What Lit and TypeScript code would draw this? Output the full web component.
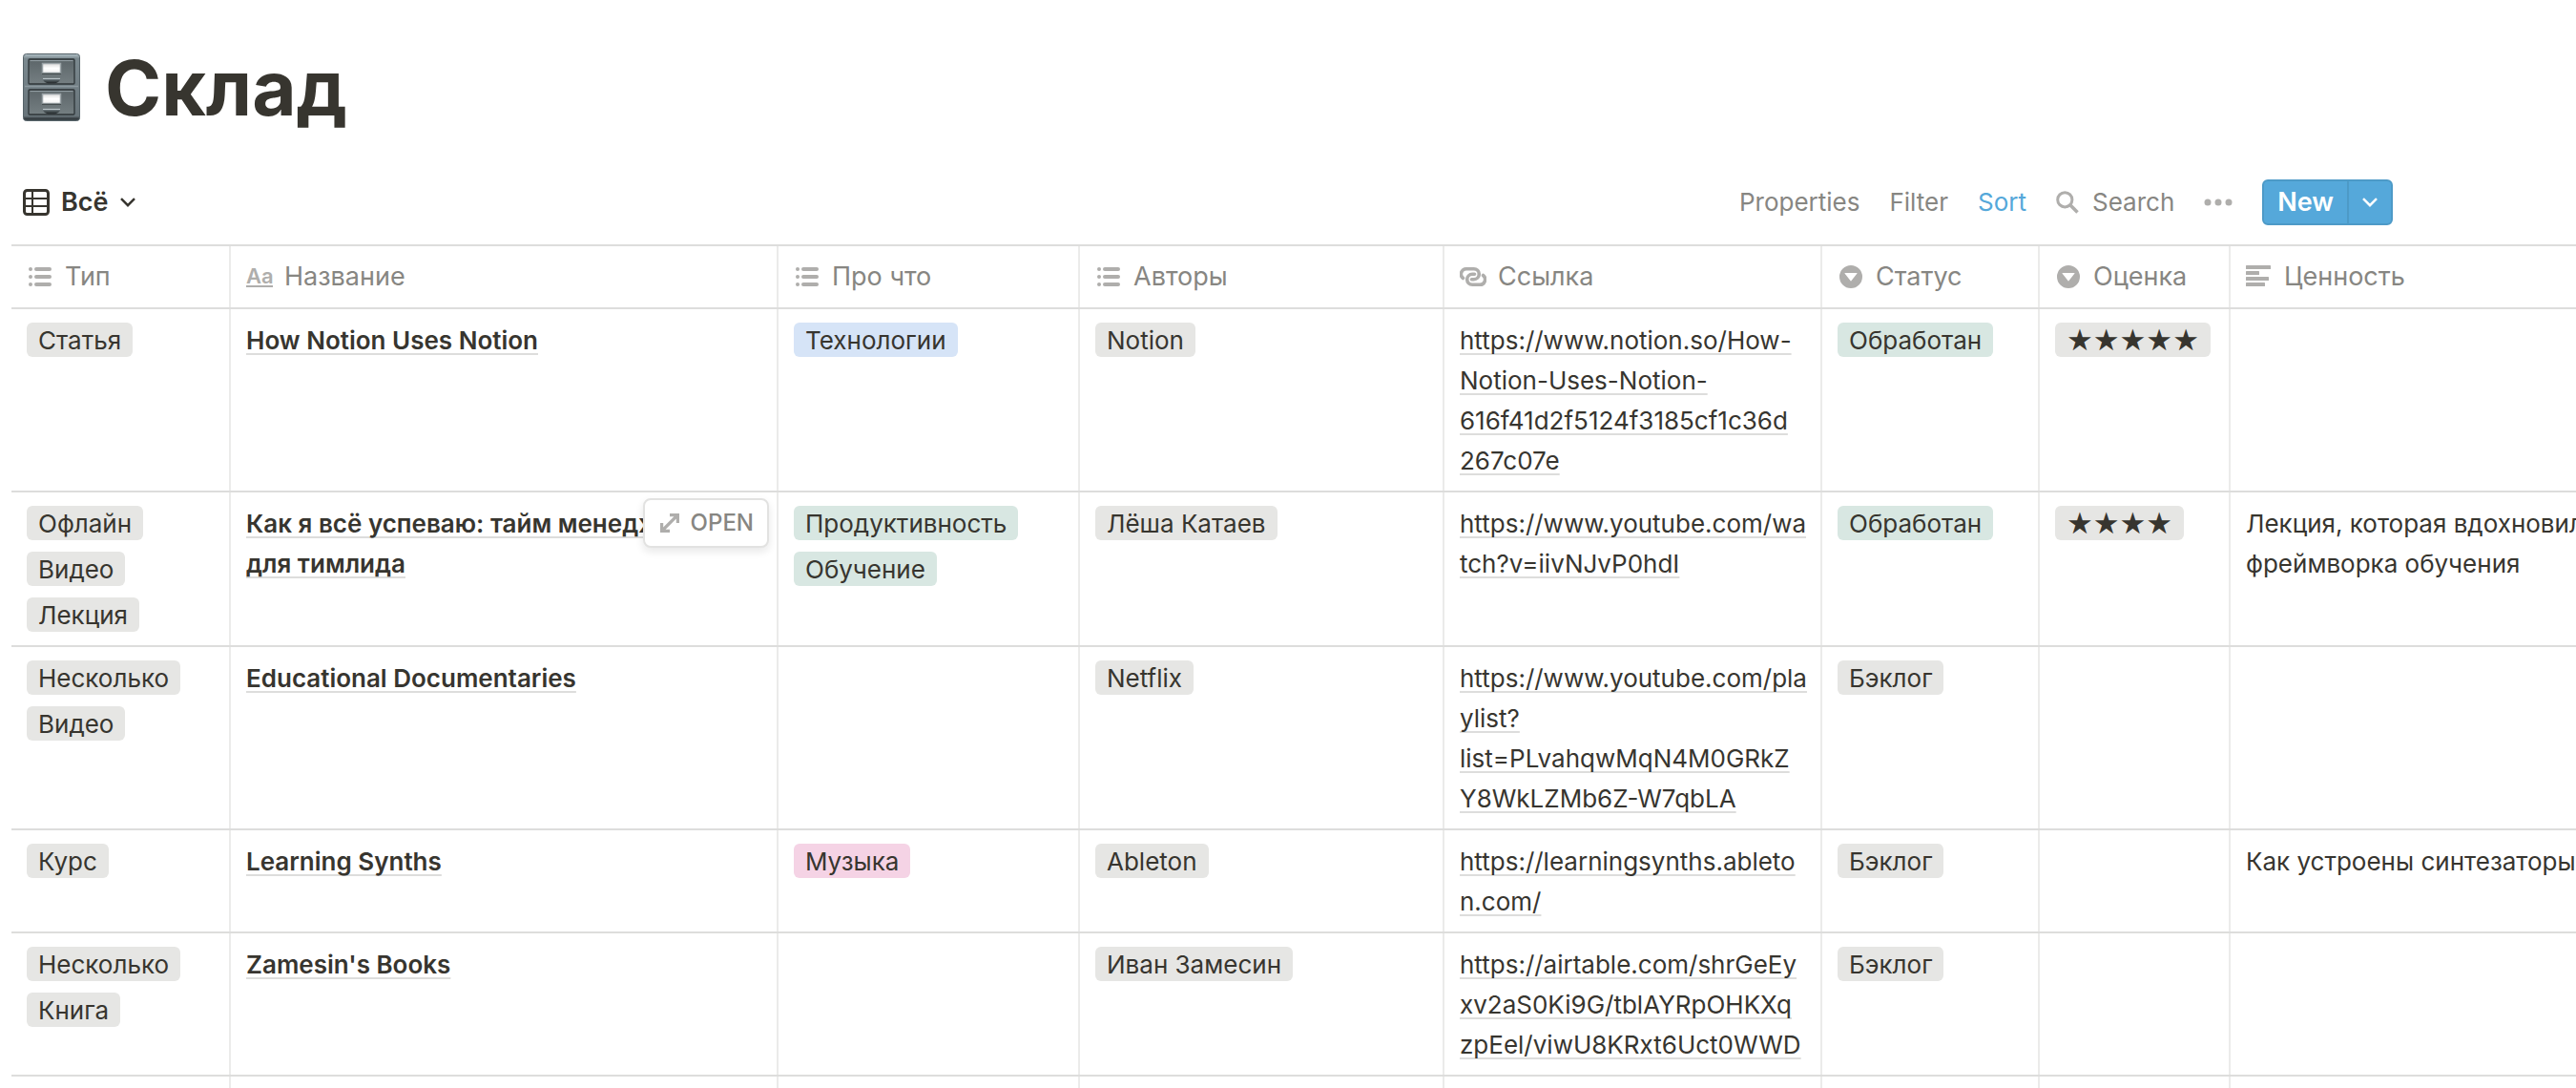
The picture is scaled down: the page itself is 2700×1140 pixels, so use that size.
import { LitElement, html, css, svg, nothing } from "lit";
import { customElement } from "lit/decorators.js";

type Tone = "gray" | "green" | "blue" | "pink";
type Tag = { label: string; tone: Tone };
type Row = {
  kind: string[];
  name: string[];
  topics: Tag[];
  authors: string[];
  link: string[];
  status: Tag;
  stars: number;
  value: string[];
  hovered?: boolean;
};

const done: Tag = { label: "Обработан", tone: "green" };
const backlog: Tag = { label: "Бэклог", tone: "gray" };

const rows: Row[] = [
  {
    kind: ["Статья"],
    name: ["How Notion Uses Notion"],
    topics: [{ label: "Технологии", tone: "blue" }],
    authors: ["Notion"],
    link: ["https://www.notion.so/How-", "Notion-Uses-Notion-", "616f41d2f5124f3185cf1c36d", "267c07e"],
    status: done,
    stars: 5,
    value: [],
  },
  {
    kind: ["Офлайн", "Видео", "Лекция"],
    name: ["Как я всё успеваю: тайм менеджмент", "для тимлида"],
    topics: [
      { label: "Продуктивность", tone: "green" },
      { label: "Обучение", tone: "green" },
    ],
    authors: ["Лёша Катаев"],
    link: ["https://www.youtube.com/wa", "tch?v=iivNJvP0hdI"],
    status: done,
    stars: 4,
    value: ["Лекция, которая вдохновила", "фреймворка обучения"],
    hovered: true,
  },
  {
    kind: ["Несколько", "Видео"],
    name: ["Educational Documentaries"],
    topics: [],
    authors: ["Netflix"],
    link: ["https://www.youtube.com/pla", "ylist?", "list=PLvahqwMqN4M0GRkZ", "Y8WkLZMb6Z-W7qbLA"],
    status: backlog,
    stars: 0,
    value: [],
  },
  {
    kind: ["Курс"],
    name: ["Learning Synths"],
    topics: [{ label: "Музыка", tone: "pink" }],
    authors: ["Ableton"],
    link: ["https://learningsynths.ableto", "n.com/"],
    status: backlog,
    stars: 0,
    value: ["Как устроены синтезаторы"],
  },
  {
    kind: ["Несколько", "Книга"],
    name: ["Zamesin's Books"],
    topics: [],
    authors: ["Иван Замесин"],
    link: ["https://airtable.com/shrGeEy", "xv2aS0Ki9G/tblAYRpOHKXq", "zpEel/viwU8KRxt6Uct0WWD"],
    status: backlog,
    stars: 0,
    value: [],
  },
];

const icon = (body: unknown) =>
  html`<svg class="icon" viewBox="0 0 28 28" aria-hidden="true">${body}</svg>`;

const listIcon = icon(svg`
  <rect x="2" y="4" width="4" height="4" rx="2" /><rect x="8" y="4" width="18" height="4" rx="2" />
  <rect x="2" y="12" width="4" height="4" rx="2" /><rect x="8" y="12" width="18" height="4" rx="2" />
  <rect x="2" y="20" width="4" height="4" rx="2" /><rect x="8" y="20" width="18" height="4" rx="2" />`);

const selectIcon = icon(svg`
  <path fill-rule="evenodd" d="M14 26a12 12 0 1 0 0-24 12 12 0 0 0 0 24ZM7.500 10.600a.4.4 0 0 1 .36-.6h12.280a.4.4 0 0 1 .36.6l-6.140 7.760a.4.4 0 0 1-.72 0Z" />`);

const textIcon = icon(svg`
  <rect x="0" y="2" width="26" height="4" rx="0.500" /><rect x="0" y="8" width="14" height="4" rx="0.500" />
  <rect x="0" y="14" width="24" height="4" rx="0.500" /><rect x="0" y="20" width="20" height="4" rx="0.500" />`);

const linkIcon = icon(svg`
  <g fill="none" stroke="currentColor" stroke-width="3.600" stroke-linecap="round">
    <path d="M3.500 15.500A5.500 5.500 0 0 1 7.300 5.700H14.800A5.500 5.500 0 0 1 14.800 16.700H12.500" />
    <path d="M24.500 12.500A5.500 5.500 0 0 1 20.700 22.300H13.200A5.500 5.500 0 0 1 13.200 11.300H15.500" />
  </g>`);

const titleIcon = html`<span class="aa" aria-hidden="true">Aa</span>`;

const columns = [
  { title: "Тип", icon: listIcon, cls: "c-kind" },
  { title: "Название", icon: titleIcon, cls: "c-name" },
  { title: "Про что", icon: listIcon, cls: "c-topic" },
  { title: "Авторы", icon: listIcon, cls: "c-author" },
  { title: "Ссылка", icon: linkIcon, cls: "c-link" },
  { title: "Статус", icon: selectIcon, cls: "c-status" },
  { title: "Оценка", icon: selectIcon, cls: "c-stars" },
  { title: "Ценность", icon: textIcon, cls: "c-value" },
];

const drawer = (y: number) => svg`
  <g transform="translate(0 ${y})">
    <rect x="6" y="6" width="48" height="26" rx="1" fill="url(#front)" stroke="#2f3639" stroke-width="1.300" />
    <path d="M7.500 7.600H52.500" stroke="#98a4a9" stroke-width="1" />
    <rect x="20.500" y="10.500" width="19" height="10" fill="url(#label)" stroke="#9aa3a7" stroke-width="1.500" />
    <path d="M20 21.300H40" stroke="#3a4144" stroke-width="1" />
    <path d="M21 26H39V27.500Q37 31.300 33 31.300H27Q23 31.300 21 27.500Z" fill="url(#pull)" />
    <path d="M21 26.500H39" stroke="#b9c3c7" stroke-width="1.200" />
  </g>`;

const cabinet = html`<svg class="cabinet" viewBox="0 0 60 72" role="img" aria-label="Картотека">
  <defs>
    <linearGradient id="body" x1="0" y1="0" x2="0" y2="1">
      <stop offset="0" stop-color="#b4c3c9" /><stop offset="0.070" stop-color="#7b898f" />
      <stop offset="0.930" stop-color="#68747a" /><stop offset="0.970" stop-color="#343b3f" />
      <stop offset="1" stop-color="#475257" />
    </linearGradient>
    <linearGradient id="front" x1="0" y1="0" x2="0" y2="1">
      <stop offset="0" stop-color="#5c6569" /><stop offset="1" stop-color="#757f82" />
    </linearGradient>
    <linearGradient id="label" x1="0" y1="0" x2="0" y2="1">
      <stop offset="0" stop-color="#dcdcdc" /><stop offset="0.500" stop-color="#ffffff" />
      <stop offset="1" stop-color="#f2f2f2" />
    </linearGradient>
    <linearGradient id="pull" x1="0" y1="0" x2="0" y2="1">
      <stop offset="0" stop-color="#78858a" /><stop offset="1" stop-color="#1f2426" />
    </linearGradient>
  </defs>
  <rect x="0.500" y="0.500" width="59" height="70" rx="3" fill="url(#body)" stroke="#566369" />
  <path d="M2 34.500H58" stroke="#8d999e" stroke-width="1.500" />
  ${drawer(0)} ${drawer(32)}
</svg>`;

const lines = (parts: string[]) => parts.map((p, i) => (i ? html`<br />${p}` : p));

@customElement("app-root")
export class AppRoot extends LitElement {
  static styles = css`
    :host {
      --ink: #37352f;
      --muted: #878682;
      --faint: #afaeac;
      --rule: #dddddc;
      --rule-soft: #ebebea;
      display: block;
      min-height: 100vh;
      box-sizing: border-box;
      overflow: hidden;
      background: #ffffff;
      color: var(--ink);
      font-family: Inter, "Liberation Sans", sans-serif;
      font-size: 26px;
      line-height: 42px;
    }
    button {
      font: inherit;
      color: inherit;
      background: none;
      border: 0;
      margin: 0;
      padding: 0;
      cursor: pointer;
      display: flex;
      align-items: center;
    }
    svg {
      display: block;
      flex: none;
    }
    .heading {
      display: flex;
      align-items: center;
      gap: 26px;
      padding: 44px 24px 0;
    }
    .cabinet {
      width: 60px;
      height: 72px;
    }
    h1 {
      margin: 0;
      font-size: 80px;
      line-height: 96px;
      font-weight: 700;
    }
    .toolbar {
      display: flex;
      align-items: center;
      justify-content: space-between;
      height: 88px;
      padding: 28px 192px 0 24px;
    }
    .view {
      gap: 12px;
      font-size: 27px;
      font-weight: 600;
    }
    .view-icon {
      width: 28px;
      height: 28px;
    }
    .chevron {
      width: 16px;
      height: 10px;
    }
    .actions {
      display: flex;
      align-items: center;
      gap: 31px;
      color: var(--muted);
    }
    .sort {
      color: #55a8da;
    }
    .search {
      gap: 14px;
    }
    .glass {
      width: 24px;
      height: 24px;
      color: var(--faint);
    }
    .dots {
      width: 30px;
      height: 8px;
      fill: var(--faint);
    }
    .new {
      display: flex;
      height: 48px;
      box-sizing: border-box;
      border: 2px solid #4d9ac7;
      border-radius: 6px;
      background: #55a8da;
      color: #ffffff;
      font-weight: 600;
    }
    .new-main {
      padding: 0 14px;
      border-right: 2px solid #4d9ac7;
      font-size: 27px;
    }
    .new-more {
      padding: 0 14px;
    }
    .scroller {
      padding-left: 12px;
    }
    table {
      width: 2824px;
      table-layout: fixed;
      border-collapse: separate;
      border-spacing: 0;
      border-top: 2px solid var(--rule);
    }
    .c-kind { width: 230px; }
    .c-name { width: 574px; }
    .c-topic { width: 316px; }
    .c-author { width: 382px; }
    .c-link { width: 396px; }
    .c-status { width: 228px; }
    .c-stars { width: 200px; }
    .c-value { width: auto; }
    th,
    td {
      padding: 0;
      border-bottom: 2px solid var(--rule);
      vertical-align: top;
      text-align: left;
      font-weight: 400;
      white-space: nowrap;
      height: 1px;
    }
    .cell {
      box-sizing: border-box;
      height: 100%;
      padding: 12px 14px 10px 16px;
      border-right: 2px solid var(--rule-soft);
      position: relative;
    }
    .head {
      display: flex;
      align-items: center;
      gap: 12px;
      padding-top: 11px;
      padding-bottom: 11px;
      color: var(--muted);
      font-size: 27px;
    }
    .icon {
      width: 28px;
      height: 28px;
      color: var(--faint);
      fill: var(--faint);
    }
    .aa {
      color: var(--faint);
      width: 28px;
      font-size: 22px;
      line-height: 20px;
      font-weight: 600;
      border-bottom: 2px solid var(--faint);
    }
    .tags {
      display: flex;
      flex-direction: column;
      align-items: flex-start;
      gap: 12px;
      padding-top: 14px;
      padding-bottom: 14px;
    }
    .tag {
      height: 36px;
      line-height: 38px;
      padding: 0 12px;
      border-radius: 6px;
    }
    .stars {
      font-family: "DejaVu Sans", sans-serif;
      font-size: 31px;
      line-height: 36px;
    }
    .gray { background: #e6e6e4; }
    .green { background: #d8e7e2; }
    .blue { background: #d6e4f7; }
    .pink { background: #f5d3e5; }
    a {
      color: inherit;
      text-decoration: underline;
      text-decoration-color: var(--rule);
      text-decoration-thickness: 2px;
      text-underline-offset: 4px;
      text-decoration-skip-ink: none;
    }
    .name {
      font-weight: 600;
    }
    .open {
      position: absolute;
      top: 6px;
      right: 8px;
      height: 52px;
      box-sizing: border-box;
      padding: 0 14px 0 16px;
      gap: 12px;
      border: 2px solid #e2e2e1;
      border-radius: 8px;
      background: #ffffff;
      box-shadow: 0 4px 8px rgba(15, 15, 15, 0.1);
      color: var(--muted);
      font-size: 24px;
      font-weight: 500;
    }
    .expand {
      width: 20px;
      height: 20px;
      fill: var(--faint);
    }
    .tail .cell {
      height: 42px;
    }
  `;

  private chevron() {
    return html`<svg class="chevron" viewBox="0 0 16 10" fill="none" stroke="currentColor"
      stroke-width="2.500" aria-hidden="true"><path d="M1 1.200L8 8.200L15 1.200" /></svg>`;
  }

  private tags(items: Tag[], extra = "") {
    return html`<td><div class="cell tags">
      ${items.map((t) => html`<span class="tag ${t.tone} ${extra}">${t.label}</span>`)}
    </div></td>`;
  }

  private openButton() {
    return html`<button class="open" type="button">
      <svg class="expand" viewBox="0 0 20 20" aria-hidden="true">
        <path d="M10 0H20V10H16.800V5.600L5.600 16.800H10V20H0V10H3.200V14.400L14.400 3.200H10Z" />
      </svg>OPEN</button>`;
  }

  private row(r: Row) {
    const gray = (label: string): Tag => ({ label, tone: "gray" });
    return html`<tr>
      ${this.tags(r.kind.map(gray))}
      <td><div class="cell name"><a href="#">${lines(r.name)}</a>${r.hovered ? this.openButton() : nothing}</div></td>
      ${this.tags(r.topics)}
      ${this.tags(r.authors.map(gray))}
      <td><div class="cell"><a href=${r.link.join("")}>${lines(r.link)}</a></div></td>
      ${this.tags([r.status])}
      ${this.tags(r.stars ? [gray("★".repeat(r.stars))] : [], "stars")}
      <td><div class="cell">${lines(r.value)}</div></td>
    </tr>`;
  }

  render() {
    return html`
      <header class="heading">${cabinet}<h1>Склад</h1></header>
      <div class="toolbar">
        <button class="view" type="button">
          <svg class="view-icon" viewBox="0 0 28 28" fill="none" stroke="currentColor" aria-hidden="true">
            <rect x="1.500" y="1.500" width="25" height="25" rx="3" stroke-width="3" />
            <path d="M10 2V26M2 10H26M2 18H26" stroke-width="2" />
          </svg>
          Всё ${this.chevron()}
        </button>
        <div class="actions">
          <button type="button">Properties</button>
          <button type="button">Filter</button>
          <button class="sort" type="button">Sort</button>
          <button class="search" type="button">
            <svg class="glass" viewBox="0 0 24 24" fill="none" stroke="currentColor" aria-hidden="true">
              <circle cx="9.300" cy="9.300" r="7.600" stroke-width="3" />
              <path d="M14.800 14.800L22.500 22.500" stroke-width="3.600" />
            </svg>
            Search
          </button>
          <button type="button" aria-label="More">
            <svg class="dots" viewBox="0 0 30 8" aria-hidden="true">
              <circle cx="4" cy="4" r="3.500" /><circle cx="15" cy="4" r="3.500" /><circle cx="26" cy="4" r="3.500" />
            </svg>
          </button>
          <div class="new">
            <button class="new-main" type="button">New</button>
            <button class="new-more" type="button" aria-label="New from template">${this.chevron()}</button>
          </div>
        </div>
      </div>
      <div class="scroller">
        <table>
          <colgroup>${columns.map((c) => html`<col class=${c.cls} />`)}</colgroup>
          <thead>
            <tr>${columns.map((c) => html`<th scope="col"><div class="cell head">${c.icon}${c.title}</div></th>`)}</tr>
          </thead>
          <tbody>
            ${rows.map((r) => this.row(r))}
            <tr class="tail">${columns.map(() => html`<td><div class="cell"></div></td>`)}</tr>
          </tbody>
        </table>
      </div>
    `;
  }
}
